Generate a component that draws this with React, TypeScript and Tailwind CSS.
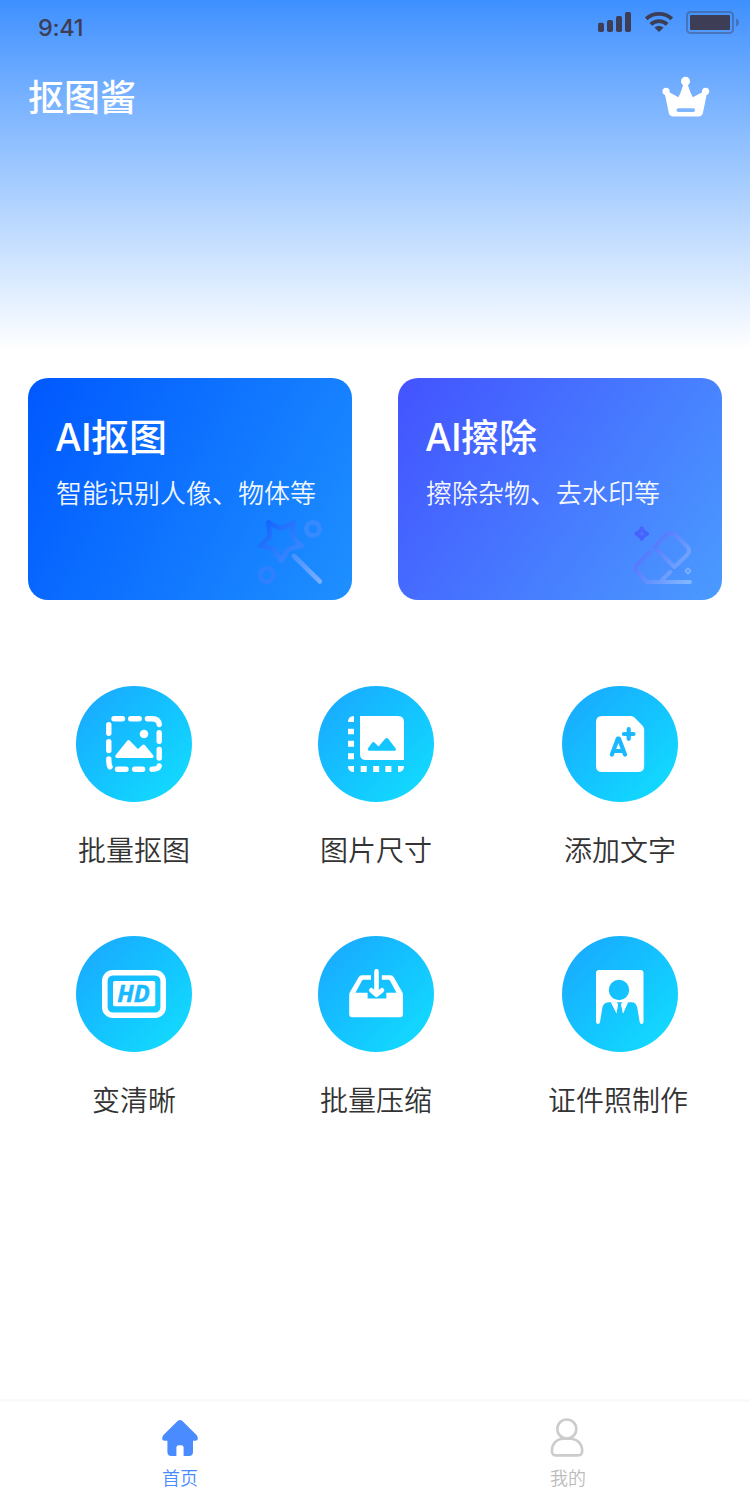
import type { ReactNode } from 'react';

const SignalIcon = () => (
  <svg className="h-5 w-[33px]" viewBox="0 0 33 20" fill="#3d3e55">
    <rect x="0" y="10.8" width="6" height="9.2" rx="1.8" />
    <rect x="9" y="8" width="6" height="12" rx="1.8" />
    <rect x="18" y="4" width="6" height="16" rx="1.8" />
    <rect x="27" y="0" width="6" height="20" rx="1.8" />
  </svg>
);

const WifiIcon = () => (
  <svg className="h-5 w-7" viewBox="0 0 28 20" fill="none" stroke="#3d3e55" strokeWidth="3.8">
    <path d="M1.2 6.8C8.4 0.3 19.6 0.3 26.8 6.8" />
    <path d="M5.8 12.4C10.6 8.1 17.4 8.1 22.2 12.4" />
    <path d="M9.4 15.6C12 13.4 16 13.4 18.6 15.6L14 20Z" fill="#3d3e55" stroke="none" />
  </svg>
);

const BatteryIcon = () => (
  <svg className="h-[23px] w-[53px]" viewBox="0 0 53 23">
    <rect x="1" y="1" width="46" height="21" rx="3.6" fill="none" stroke="#3d3e55" strokeOpacity=".4" strokeWidth="2" />
    <rect x="4" y="4" width="40" height="15" rx="1" fill="#3d3e55" />
    <path d="M50 7.5C52.3 8.3 53 10 53 11.5S52.3 14.7 50 15.5Z" fill="#3d3e55" fillOpacity=".4" />
  </svg>
);

const CrownIcon = () => (
  <svg className="h-[42px] w-12" viewBox="0 0 48 42" fill="#fff">
    <circle cx="23.5" cy="5.3" r="4.5" />
    <circle cx="4" cy="15.3" r="3.6" />
    <circle cx="43.6" cy="15.3" r="3.6" />
    <path
      fillRule="evenodd"
      d="M2.6 17L6.5 35.5Q7 40.6 11.4 40.6H36.4Q40.6 40.6 41.2 35.5L45 17L41.7 15.6L30.8 21.2C28.4 17 27 12.5 25.6 8H21.4C20 12.5 18.8 17 16.4 21.2L6 15.6ZM16.4 32.2H31.2A1.9 1.9 0 0 1 31.2 36H16.4A1.9 1.9 0 0 1 16.4 32.2Z"
    />
  </svg>
);

const WandIcon = () => (
  <svg className="h-[70px] w-[70px]" viewBox="0 0 70 70" fill="none" strokeWidth="4.8" strokeLinecap="round" strokeLinejoin="round">
    <defs>
      <linearGradient id="wandStar" x1="0" y1="0" x2="1" y2="1">
        <stop offset="0" stopColor="#1263fb" />
        <stop offset=".75" stopColor="#3484ff" />
      </linearGradient>
      <linearGradient id="wandStick" x1="0" y1="0" x2="1" y2="1">
        <stop offset="0" stopColor="#4992ff" />
        <stop offset="1" stopColor="#78aeff" />
      </linearGradient>
    </defs>
    <path d="M12.4 6.5L22 11.3Q25 12.6 28 11.3L37.8 6.5L36.5 17.5Q36.2 20.6 38.2 22.8L45.6 30L35 32Q32.4 32.6 31 35L25 45L19.4 35Q18 32.6 15 32L4.4 30L12 22.8Q14 20.6 13.6 17.5Z" stroke="url(#wandStar)" />
    <circle cx="57" cy="13" r="6.7" stroke="#368aff" />
    <circle cx="11" cy="59" r="6.7" stroke="#2d80ff" />
    <path d="M38 40L63.8 65.4" stroke="url(#wandStick)" />
  </svg>
);

const EraserIcon = () => (
  <svg className="h-16 w-16" viewBox="0 0 64 64" fill="none" strokeWidth="4" strokeLinecap="round" strokeLinejoin="round">
    <defs>
      <linearGradient id="eraser" gradientUnits="userSpaceOnUse" x1="12" y1="22" x2="58" y2="60">
        <stop offset="0" stopColor="#506cff" />
        <stop offset=".55" stopColor="#6795ff" />
        <stop offset="1" stopColor="#80b5ff" />
      </linearGradient>
    </defs>
    <path
      d="M11.7 6.1Q13 6.1 14.4 9.6Q15.4 11 18 12Q20.4 13.7 18 15.4Q15.4 16.5 14.4 18Q13 21.3 11.7 21.3Q10.4 21.3 9 18Q8 16.5 5.4 15.4Q3 13.7 5.4 12Q8 11 9 9.6Q10.4 6.1 11.7 6.1Z"
      fill="#4664fd"
    />
    <path d="M11.7 11.8V15.6M9.8 13.7H13.6" stroke="#5278ff" strokeWidth="1" />
    <path d="M24.3 26.9L36.8 14.6Q41 11 45.2 14.6L57 26.2Q61.2 30.5 57 35L44.3 47Z" stroke="url(#eraser)" />
    <path d="M20 32.4L7.2 44.6Q4.4 48 7.2 52L17 61.8M40.2 51.8L31 61" stroke="url(#eraser)" />
    <path d="M18 61.9L60 62" stroke="url(#eraser)" />
    <path d="M58 48.4L60.6 51L58 53.6L55.4 51Z" stroke="#78adff" strokeWidth="2" />
  </svg>
);

const glyph = 'h-[116px] w-[116px]';

const CutoutGlyph = () => (
  <svg className={glyph} viewBox="0 0 116 116" fill="none" stroke="#fff" strokeWidth="5.4" strokeLinecap="round">
    <path d="M38 32.8H46.5M54.7 32.8H63.2M71.4 32.8H76Q82.7 32.8 83.2 38.6M83.2 46.7V55.2M83.2 63.4V72M83.2 80Q82.6 83.2 76 83.2M58.7 83.2H66.6M41.5 83.2H50M34 80.8Q32.8 79 32.8 73M32.8 64.5V55.7M32.8 47.2V38.6" />
    <path d="M41 70.3L52.6 56L61.8 65.5L67.6 60.4L75.8 70.3Z" fill="#fff" strokeWidth="3.6" strokeLinejoin="round" />
    <circle cx="68" cy="48" r="4.3" fill="#fff" stroke="none" />
  </svg>
);

const SizeGlyph = () => (
  <svg className={glyph} viewBox="0 0 116 116" fill="#fff">
    <path
      fillRule="evenodd"
      d="M42 30H80Q86 30 86 36V74H48Q42 74 42 68ZM51 64.7H77Q78.7 64 77.7 62.4L70 52.6Q68.7 51.2 67.4 52.6L60.5 60.4L56.5 56.4Q55.3 55.4 54.2 56.5L50 62.4Q49 64.2 51 64.7Z"
    />
    <path d="M30 36Q30 30 36 30V36ZM30 42.7H36V48.3H30ZM30 54.8H36V60.8H30ZM30 67.2H36V73.2H30ZM30 80H36V86Q30 86 30 80ZM42.7 80H48.7V86H42.7ZM55.2 80H61.2V86H55.2ZM67.4 80H73.4V86H67.4ZM80 80H86Q86 86 80 86Z" />
  </svg>
);

const TextGlyph = () => (
  <svg className={glyph} viewBox="0 0 116 116" fill="none" stroke="#1ab9ff" strokeLinecap="round" strokeLinejoin="round">
    <path d="M40 30H69Q71 30 72.5 31.5L80.8 40Q82.2 41.5 82.2 43.5V80Q82.2 86 76 86H40Q34 86 34 80V36Q34 30 40 30Z" fill="#fff" stroke="none" />
    <path d="M49.9 68.6L55.9 52.6H56.9L63 68.6M52.6 65H60.4" strokeWidth="4.2" />
    <path d="M61.9 48H71.5M66.7 43.2V52.8" strokeWidth="4.2" />
  </svg>
);

const HdGlyph = () => (
  <svg className={glyph} viewBox="0 0 116 116">
    <rect x="28.8" y="36.8" width="58.4" height="42.4" rx="8" fill="none" stroke="#fff" strokeWidth="5.6" />
    <rect x="37" y="45" width="42.3" height="25.2" rx="2" fill="#fff" />
    <text
      x="41.3"
      y="66"
      textLength="32.5"
      lengthAdjust="spacingAndGlyphs"
      fill="#1ab9ff"
      stroke="#1ab9ff"
      strokeWidth=".5"
      className="font-['Open_Sans',sans-serif] text-[23.5px] font-bold italic"
    >
      HD
    </text>
  </svg>
);

const CompressGlyph = () => (
  <svg className={glyph} viewBox="0 0 116 116" fill="#fff">
    <path d="M53 39.3H43.8Q41.7 39.3 40.6 41.2L32 56Q31.2 57.5 31.2 59V78.3Q31.2 81.3 34.2 81.3H82Q85 81.3 85 78.3V59Q85 57.5 84.2 56L75.8 41.2Q74.7 39.3 72.6 39.3H63.8V43.7H70.4Q71.5 43.7 72 44.7L78.5 56.8H68.3V62.5H49.6V56.8H37.5L43.9 44.7Q44.4 43.7 45.5 43.7H53Z" />
    <path d="M58.5 35.3V58M53.3 54.3L58.5 58.8L64 54.3" fill="none" stroke="#fff" strokeWidth="4.6" strokeLinecap="round" strokeLinejoin="round" />
  </svg>
);

const PortraitGlyph = () => (
  <svg className={glyph} viewBox="0 0 116 116" fill="#fff">
    <path
      fillRule="evenodd"
      d="M37 34H78.5Q81.5 34 81.5 37V85.5Q81.5 88 79.7 88Q78 88 77.7 86L75.2 71.5Q74 66.3 69.5 66.3H66L61 77.2L59.3 68.8L60.3 66.3H54.7L55.7 68.8L54.6 77.2L49 66.3H46.5Q41.5 66.5 40.4 71.5L38 86Q37.5 88 36.2 88Q34 88 34 85.5V37Q34 34 37 34ZM57 43.8A10.2 10.2 0 1 0 57 64.2A10.2 10.2 0 1 0 57 43.8Z"
    />
    <path d="M49 66.3H54.9L55.9 68.8L54.6 77.4ZM66 66.3H60.1L59.1 68.8L61 77.4Z" />
  </svg>
);

/* The torso is cut out of the portrait, so the collar and tie are laid over it separately. */

type Card = { title: string; text: string; tone: string; pad: string; icon: ReactNode };

const cards: Card[] = [
  {
    title: '抠图',
    text: '智能识别人像、物体等',
    tone: 'bg-linear-[118deg] from-[#0058ff] to-[#1e90ff]',
    pad: 'pr-[26px] pb-3.5',
    icon: <WandIcon />,
  },
  {
    title: '擦除',
    text: '擦除杂物、去水印等',
    tone: 'bg-linear-[125deg] from-[#4353ff] to-[#4a9bff]',
    pad: 'pr-7 pb-4',
    icon: <EraserIcon />,
  },
];

const tools: { label: string; icon: ReactNode }[] = [
  { label: '批量抠图', icon: <CutoutGlyph /> },
  { label: '图片尺寸', icon: <SizeGlyph /> },
  { label: '添加文字', icon: <TextGlyph /> },
  { label: '变清晰', icon: <HdGlyph /> },
  { label: '批量压缩', icon: <CompressGlyph /> },
  { label: '证件照制作', icon: <PortraitGlyph /> },
];

export default function App() {
  return (
    <div className="flex h-[1500px] w-[750px] flex-col overflow-hidden bg-white font-['Noto_Sans_CJK_SC',sans-serif]">
      <header className="h-[350px] shrink-0 bg-linear-to-b from-[#3d90ff] to-white">
        <div className="flex h-14 items-start justify-between pt-[11px] pr-[11px] pl-[38px]">
          <span className="pt-[3px] font-[Inter,sans-serif] text-[23.5px] leading-7 font-[450] tracking-[-0.3px] text-[#3d3e55]">9:41</span>
          <div className="flex items-start">
            <div className="pt-px"><SignalIcon /></div>
            <div className="pt-px pl-3.5"><WifiIcon /></div>
            <div className="pl-[13px]"><BatteryIcon /></div>
          </div>
        </div>
        <div className="flex items-start justify-between pt-5 pr-10 pl-7">
          <h1 className="-mt-0.5 text-[36px] leading-[42px] font-medium text-white">抠图酱</h1>
          <CrownIcon />
        </div>
      </header>

      <main className="flex-1">
        <section className="flex justify-between px-7 pt-7">
          {cards.map((c) => (
            <article key={c.title} className={`flex h-[222px] w-[324px] flex-col rounded-[20px] ${c.tone} ${c.pad}`}>
              <h2 className="h-[84px] pt-[30px] pl-[27px] text-[38px] leading-[54px] font-medium text-white">
                <span className="font-[Inter,sans-serif] text-[37.5px] leading-none tracking-[-0.4px]">AI</span>
                {c.title}
              </h2>
              <p className="pt-3 pl-7 text-[26px] leading-9 font-[350] whitespace-nowrap text-white/95">{c.text}</p>
              <div className="mt-auto self-end">{c.icon}</div>
            </article>
          ))}
        </section>

        <section className="grid grid-cols-[244px_240px_248px] gap-y-[66px] pt-[86px] pl-3">
          {tools.map((t) => (
            <div key={t.label} className="flex flex-col items-center">
              <div className="h-[116px] w-[116px] rounded-full bg-linear-to-br from-[#1ba5ff] to-[#14e0ff]">{t.icon}</div>
              <span className={`mt-[27px] mb-px text-[28px] leading-10 font-[350] text-[#333] ${t.label.length === 5 ? 'mr-1' : ''}`}>{t.label}</span>
            </div>
          ))}
        </section>
      </main>

      <nav className="flex h-[101px] shrink-0 justify-between border-t-3 border-[#fafafa] pr-[164px] pl-[162px]">
        <div className="flex w-9 flex-col items-center pt-[18px]">
          <svg className="h-9 w-9" viewBox="0 0 36 36" fill="#4a8cff">
            <path d="M15.6 1.1Q18 -1 20.4 1.1L35 15.6Q37.3 20.8 33 20.8H31V32Q31 36 27 36H21.6V27.6Q21.6 25.2 19.2 25.2H16.8Q14.4 25.2 14.4 27.6V36H9.4Q5.4 36 5.4 32V20.8H3Q-1.3 20.8 1 15.6Z" />
          </svg>
          <span className="mt-2 text-[18px] leading-[26px] font-[350] whitespace-nowrap text-[#4a8cff]">首页</span>
        </div>
        <div className="flex w-9 flex-col items-center pt-4">
          <svg className="h-10 w-9" viewBox="0 0 36 40" fill="none" stroke="#ccc" strokeWidth="2.6">
            <circle cx="16.8" cy="11" r="9.5" />
            <path d="M13.5 20.7H20C27.5 20.7 32.2 26 32.2 33Q32.2 37.4 28 37.4H6.1Q1.9 37.4 1.9 33C1.9 26 6.5 20.7 13.5 20.7Z" />
          </svg>
          <span className="mt-1.5 text-[18px] leading-[26px] font-[350] whitespace-nowrap text-[#bbb]">我的</span>
        </div>
      </nav>
    </div>
  );
}
